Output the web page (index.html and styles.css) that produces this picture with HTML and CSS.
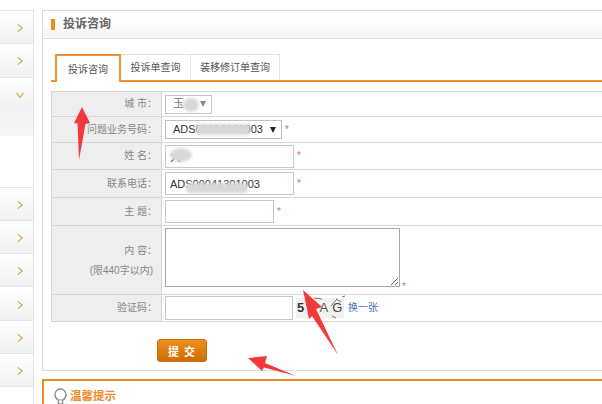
FILE: index.html
```html
<!DOCTYPE html>
<html lang="zh">
<head>
<meta charset="utf-8">
<title>投诉咨询</title>
<link rel="stylesheet" href="styles.css">
</head>
<body>
<div class="page">
  <aside class="sidebar">
    <div class="nav-item"><svg class="chev" viewBox="0 0 10 10"><path d="M2 1l5 4-5 4"/></svg></div>
    <div class="nav-item"><svg class="chev" viewBox="0 0 10 10"><path d="M2 1l5 4-5 4"/></svg></div>
    <div class="nav-item nav-open"><svg class="chev chev-down" viewBox="0 0 10 10"><path d="M1 2l4 5 4-5"/></svg></div>
    <div class="nav-sub"></div>
    <div class="nav-blank"></div>
    <div class="nav-item"><svg class="chev" viewBox="0 0 10 10"><path d="M2 1l5 4-5 4"/></svg></div>
    <div class="nav-item"><svg class="chev" viewBox="0 0 10 10"><path d="M2 1l5 4-5 4"/></svg></div>
    <div class="nav-item"><svg class="chev" viewBox="0 0 10 10"><path d="M2 1l5 4-5 4"/></svg></div>
    <div class="nav-item"><svg class="chev" viewBox="0 0 10 10"><path d="M2 1l5 4-5 4"/></svg></div>
    <div class="nav-item"><svg class="chev" viewBox="0 0 10 10"><path d="M2 1l5 4-5 4"/></svg></div>
    <div class="nav-item"><svg class="chev" viewBox="0 0 10 10"><path d="M2 1l5 4-5 4"/></svg></div>
  </aside>
  <main class="content">
    <section class="panel">
      <header class="panel-head"><i class="head-mark"></i><h1>投诉咨询</h1></header>
      <div class="panel-body">
        <nav class="tabs">
          <a class="tab tab-active">投诉咨询</a>
          <a class="tab tab-2">投诉单查询</a>
          <a class="tab tab-3">装移修订单查询</a>
        </nav>
        <table class="form">
          <tr class="r1"><th>城 市：</th><td><span class="select select-city"><span>玉</span><i class="caret caret-soft"></i></span></td></tr>
          <tr class="r2"><th>问题业务号码：</th><td><span class="select select-num"><span>ADS00000000003</span><i class="caret"></i></span><b class="req">*</b></td></tr>
          <tr class="r3"><th>姓 名：</th><td><input class="inp inp-l" value="大"><b class="req">*</b></td></tr>
          <tr class="r4"><th>联系电话：</th><td><input class="inp inp-l" value="ADS00041301003"><b class="req">*</b></td></tr>
          <tr class="r5"><th>主 题：</th><td><input class="inp inp-m"><b class="req">*</b></td></tr>
          <tr class="r6"><th class="th-area"><p>内 容：</p><p class="limit">(限440字以内)</p></th><td><textarea class="area"></textarea><b class="req req-area">*</b></td></tr>
          <tr class="r7"><th>验证码：</th><td><input class="inp inp-code"><span class="captcha"><b>5</b><em>3</em><span>A</span><em>G</em></span><a class="refresh">换一张</a></td></tr>
        </table>
        <div class="actions"><button class="submit">提 交</button></div>
      </div>
    </section>
    <section class="tips">
      <svg class="bulb" viewBox="0 0 13 18"><path d="M4.2 12.2C2.4 11 1 9.300 1 6.800 1 3.500 3.400 1 6.500 1S12 3.500 12 6.800c0 2.500-1.400 4.200-3.200 5.400z"/><path d="M4.400 12.500v3.500h4.200v-3.500"/></svg>
      <h2>温馨提示</h2>
    </section>
  </main>
  <svg class="overlay" viewBox="0 0 602 404">
    <defs><filter id="soft" x="-30%" y="-60%" width="160%" height="220%"><feGaussianBlur stdDeviation="1.6"/></filter></defs>
    <g class="smudges" filter="url(#soft)">
      <ellipse cx="191" cy="105" rx="8" ry="7"/>
      <rect x="196" y="124" width="54" height="11" rx="2"/>
      <ellipse cx="181" cy="155" rx="11" ry="7"/>
      <rect x="186" y="183" width="62" height="10" rx="4"/>
    </g>
    <g class="noise">
      <path d="M306 300l6 3M309 316l7-2M314 298l8 1M331 306l6-7M336 299l5 3M342 297l3-1M332 316l4 2"/>
    </g>
    <g class="arrows">
      <path d="M82 107L90 123 85.500 124 79 160 77.500 123.500 74 123z"/>
      <path d="M303 290L322 307 316 309 338 355 312 316 309 319z"/>
      <path d="M248 358L267 356 265 363 296 376 264 367.500 262 371z"/>
    </g>
  </svg>
</div>
</body>
</html>
```
FILE: styles.css
```css
* { box-sizing: border-box; }
html, body { margin: 0; height: 100%; overflow: hidden; background: #fff; }
body { font: 10px/1.2 "Liberation Sans", "Noto Sans CJK SC", sans-serif; color: #666; }
p, h1, h2 { margin: 0; }

.page { position: relative; width: 602px; height: 404px; overflow: hidden; display: flex; gap: 8px; padding-top: 10px; }

.sidebar { flex: 0 0 34px; height: 500px; border-top: 1px solid #e4e4e4; border-right: 1px solid #e4e4e4; display: flex; flex-direction: column; }
.nav-item { flex: 0 0 33.300px; display: flex; align-items: center; justify-content: flex-end; padding: 2px 8px 0 0; background: linear-gradient(#fff, #f1f1f1); border-bottom: 1px solid #e6e6e6; }
.nav-open { flex-basis: 31px; border-bottom: 0; padding: 4px 8px 0 0; }
.nav-sub { flex: 0 0 27px; background: linear-gradient(#f4f4f4, #f6f6f6); }
.nav-blank { flex: 0 0 52px; border-bottom: 1px solid #e6e6e6; }
.chev { width: 9px; height: 10px; }
.chev path { fill: none; stroke: #cfa94e; stroke-width: 1.300; }
.chev-down { width: 10px; height: 9px; }

.content { flex: 0 0 700px; display: flex; flex-direction: column; gap: 8px; }

.panel { flex: none; border: 1px solid #dcdcdc; height: 361px; }
.panel-head { height: 28px; display: flex; align-items: center; padding-left: 8px; border-bottom: 1px solid #dedede; background: linear-gradient(#fff 35%, #f4f4f4 92%, #fbfbfb); }
.head-mark { width: 4px; height: 11px; background: #f08a1c; margin-right: 8px; }
.panel-head h1 { font-size: 12px; font-weight: 700; color: #666; }

.panel-body { padding: 15px 0 0 8px; }

.tabs { display: flex; height: 28px; padding-left: 4px; border-bottom: 2px solid #f0922b; }
.tab { height: 26px; display: flex; align-items: center; justify-content: center; background: #fff; border: 1px solid #e2e2e2; border-bottom: 0; border-left: 0; color: #555; font-size: 10px; }
.tab-active { width: 66px; height: 28px; border: 2px solid #f0922b; border-bottom: 0; background: #fff; padding-top: 2px; }
.tab-2 { width: 70px; }
.tab-3 { width: 89px; }

.form { margin-top: 9px; width: 640px; border-collapse: collapse; table-layout: fixed; background: #fff; }
.form th, .form td { border: 1px solid #d6d6d6; padding: 0; }
.form th { width: 110px; background: #eee; font-weight: 400; color: #888; text-align: right; padding-right: 4px; }
.form td { padding-left: 3px; border-right: 0; }
.form .th-area { padding-top: 2px; }
.form p { line-height: 20px; }
.form .limit { padding-right: 4px; }
.r1 { height: 25px; } .r2 { height: 26px; } .r3 { height: 27px; } .r4 { height: 28px; }
.r5 { height: 28px; } .r6 { height: 69px; } .r7 { height: 27px; }

.select { display: inline-flex; align-items: center; justify-content: space-between; vertical-align: middle; height: 19px; border: 1px solid #c6c6c6; background: #fff; color: #333; padding: 0 5px 0 7px; font-size: 11px; }
.select-city { width: 47px; color: #777; }
.select-num { width: 117px; border-color: #b9c4c4; }
.caret { width: 0; height: 0; border: 3.500px solid transparent; border-top: 6px solid #222; border-bottom: 0; }
.caret-soft { border-top-color: #888; }

.inp { vertical-align: middle; height: 23px; border: 1px solid #c8c8c8; background: #fff; padding: 0 4px; font: 11px "Liberation Sans", "Noto Sans CJK SC", sans-serif; color: #333; outline: 0; }
.inp-l { width: 129px; }
.inp-m { width: 109px; }
.inp-code { width: 128px; height: 24px; }
.req { font-weight: 400; color: #e8608a; margin-left: 3px; font-size: 10px; vertical-align: middle; }
.area { display: inline-block; vertical-align: top; width: 235px; height: 59px; border: 1px solid #a8a8a8; background: #fff; margin: 0; padding: 2px; outline: 0; }
.req-area { display: inline-block; vertical-align: top; margin: 53px 0 0 2px; }

.captcha { display: inline-flex; align-items: center; gap: 4px; vertical-align: middle; width: 48px; height: 20px; margin-left: 3px; background: #f1f1ee; font-size: 13px; color: #555; padding-left: 1px; overflow: hidden; }
.captcha b { color: #333; }
.captcha em { font-style: normal; color: #444; }
.refresh { margin-left: 4px; color: #3f6fc0; vertical-align: middle; font-size: 10px; }

.actions { padding: 17px 0 0 106px; }
.submit { width: 50px; height: 23px; border: 1px solid #c96f10; border-radius: 3px; background: linear-gradient(#ed8f1e, #cf6c02); color: #fff; font: 700 11px "Liberation Sans", "Noto Sans CJK SC", sans-serif; letter-spacing: 1px; padding: 0; }

.tips { flex: none; display: flex; align-items: flex-start; height: 40px; padding: 7px 0 0 10px; border-top: 2px solid #f08a28; border-left: 2px solid #f08a28; }
.bulb { width: 13px; height: 18px; flex: none; margin-right: 3px; }
.bulb path { fill: #fff; stroke: #888; stroke-width: 1.300; }
.tips h2 { font-size: 11.500px; line-height: 16px; font-weight: 700; color: #f08a28; }

.overlay { position: absolute; left: 0; top: 0; width: 602px; height: 404px; pointer-events: none; }
.smudges { fill: #d8d8d8; }
.noise path { fill: none; stroke: #555; stroke-width: .8; }
.arrows { fill: #f23a3e; }
```
